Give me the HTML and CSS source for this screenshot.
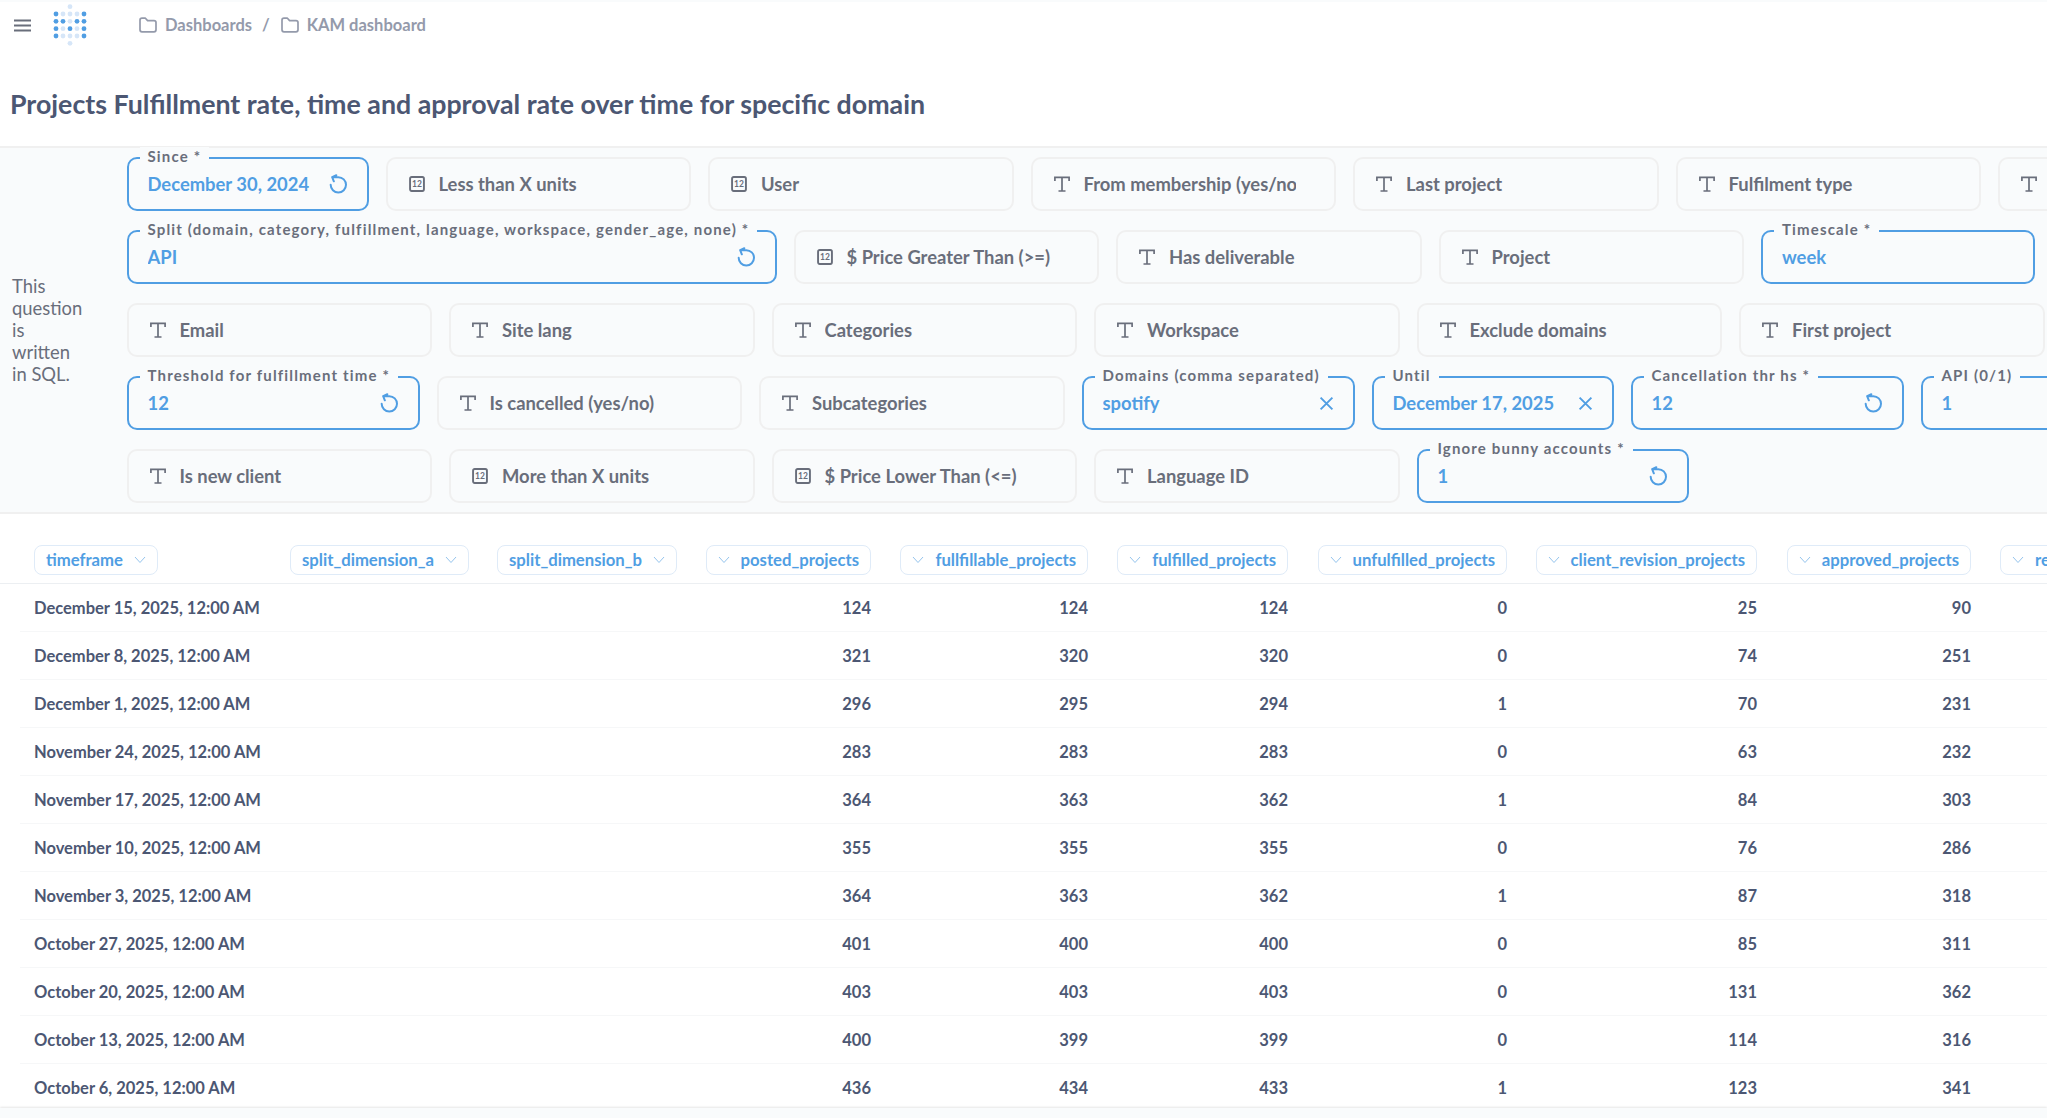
FILE: index.html
```html
<!DOCTYPE html>
<html lang="en">
  <head>
    <meta charset="UTF-8" />
    <meta name="viewport" content="width=device-width, initial-scale=1.0" />
    <title>Projects Fulfillment rate</title>
    <link rel="stylesheet" href="styles.css">
  </head>
  <body>
    <!-- Icons -->
    <svg class="icon-defs" width="0" height="0">
      <symbol id="i-folder" viewBox="0 0 18 16"><path d="M1 3.2C1 2 1.8 1.2 3 1.2h3.4l2.2 2.4H15c1.200 0 2 .8 2 2v7.200c0 1.200-.8 2-2 2H3c-1.200 0-2-.8-2-2z" fill="none" stroke="currentColor" stroke-width="1.700" stroke-linejoin="round"/></symbol>
      <symbol id="i-text" viewBox="0 0 16 16"><path d="M.9 5V1.300h14.200V5M8 1.300V15M4.500 15h7" fill="none" stroke="currentColor" stroke-width="1.700"/></symbol>
      <symbol id="i-number" viewBox="0 0 15 15"><rect x="1" y="1" width="13" height="13" rx="1.500" fill="none" stroke="currentColor" stroke-width="1.800"/><text x="7.500" y="10.700" text-anchor="middle" font-family="Lato" font-size="8" font-weight="700" fill="currentColor">12</text></symbol>
      <symbol id="i-reset" viewBox="0 0 24 24"><path d="M3.200 13a9.200 9.200 0 1 0 9.200-9.200H5.500M10 1.500L5 3.800l2 5" fill="none" stroke="currentColor" stroke-width="2.400" stroke-linecap="round" stroke-linejoin="round"/></symbol>
      <symbol id="i-close" viewBox="0 0 14 14"><path d="M1.500 1.500l11 11M12.500 1.500l-11 11" fill="none" stroke="currentColor" stroke-width="1.800"/></symbol>
      <symbol id="i-chevron" viewBox="0 0 12 8"><path d="M1 1l5 5.500L11 1" fill="none" stroke="currentColor" stroke-width="1"/></symbol>
    </svg>

    <!-- Navbar -->
    <header class="navbar">
      <svg class="menu-icon" width="17" height="13" viewBox="0 0 17 13"><path d="M0 1.500h17M0 6.500h17M0 11.500h17" stroke="#696e7b" stroke-width="2.200"/></svg>
      <svg class="logo" width="34" height="42" viewBox="0 0 34 42">
        <g fill="#509ee3">
          <circle cx="3" cy="10" r="2.400"/><circle cx="31" cy="10" r="2.400"/>
          <circle cx="3" cy="17.300" r="2.400"/><circle cx="10" cy="17.300" r="2.400"/><circle cx="24" cy="17.300" r="2.400"/><circle cx="31" cy="17.300" r="2.400"/>
          <circle cx="3" cy="24.700" r="2.400"/><circle cx="17" cy="24.700" r="2.400"/><circle cx="31" cy="24.700" r="2.400"/>
          <circle cx="3" cy="32" r="2.400"/><circle cx="31" cy="32" r="2.400"/>
        </g>
        <g fill="#d6e6f8">
          <circle cx="17" cy="2.700" r="2.400"/>
          <circle cx="10" cy="10" r="2.400"/><circle cx="17" cy="10" r="2.400"/><circle cx="24" cy="10" r="2.400"/>
          <circle cx="17" cy="17.300" r="2.400"/>
          <circle cx="10" cy="24.700" r="2.400"/><circle cx="24" cy="24.700" r="2.400"/>
          <circle cx="10" cy="32" r="2.400"/><circle cx="17" cy="32" r="2.400"/><circle cx="24" cy="32" r="2.400"/>
          <circle cx="17" cy="39.300" r="2.400"/>
        </g>
      </svg>
      <nav class="breadcrumbs">
        <svg class="crumb-icon"><use href="#i-folder"/></svg>
        <span>Dashboards</span>
        <span class="crumb-sep">/</span>
        <svg class="crumb-icon"><use href="#i-folder"/></svg>
        <span>KAM dashboard</span>
      </nav>
    </header>

    <h1 class="title">Projects Fulfillment rate, time and approval rate over time for specific domain</h1>

    <!-- Parameters -->
    <section class="params">
      <p class="sql-note">This question is written in SQL.</p>
      <div class="param-rows">
        <div class="param-row">
          <div class="param is-set w-since"><label>Since *</label><span class="param-value">December 30, 2024</span><svg class="param-action"><use href="#i-reset"/></svg></div>
          <div class="param"><svg class="param-icon"><use href="#i-number"/></svg><span class="param-value">Less than X units</span></div>
          <div class="param"><svg class="param-icon"><use href="#i-number"/></svg><span class="param-value">User</span></div>
          <div class="param"><svg class="param-icon"><use href="#i-text"/></svg><span class="param-value">From membership (yes/no)</span></div>
          <div class="param"><svg class="param-icon"><use href="#i-text"/></svg><span class="param-value">Last project</span></div>
          <div class="param"><svg class="param-icon"><use href="#i-text"/></svg><span class="param-value">Fulfilment type</span></div>
          <div class="param"><svg class="param-icon"><use href="#i-text"/></svg><span class="param-value">Gender</span></div>
        </div>
        <div class="param-row">
          <div class="param is-set w-split"><label>Split (domain, category, fulfillment, language, workspace, gender_age, none) *</label><span class="param-value">API</span><svg class="param-action"><use href="#i-reset"/></svg></div>
          <div class="param"><svg class="param-icon"><use href="#i-number"/></svg><span class="param-value">$ Price Greater Than (&gt;=)</span></div>
          <div class="param"><svg class="param-icon"><use href="#i-text"/></svg><span class="param-value">Has deliverable</span></div>
          <div class="param"><svg class="param-icon"><use href="#i-text"/></svg><span class="param-value">Project</span></div>
          <div class="param is-set w-timescale"><label>Timescale *</label><span class="param-value">week</span></div>
        </div>
        <div class="param-row">
          <div class="param"><svg class="param-icon"><use href="#i-text"/></svg><span class="param-value">Email</span></div>
          <div class="param"><svg class="param-icon"><use href="#i-text"/></svg><span class="param-value">Site lang</span></div>
          <div class="param"><svg class="param-icon"><use href="#i-text"/></svg><span class="param-value">Categories</span></div>
          <div class="param"><svg class="param-icon"><use href="#i-text"/></svg><span class="param-value">Workspace</span></div>
          <div class="param"><svg class="param-icon"><use href="#i-text"/></svg><span class="param-value">Exclude domains</span></div>
          <div class="param"><svg class="param-icon"><use href="#i-text"/></svg><span class="param-value">First project</span></div>
        </div>
        <div class="param-row">
          <div class="param is-set w-threshold"><label>Threshold for fulfillment time *</label><span class="param-value">12</span><svg class="param-action"><use href="#i-reset"/></svg></div>
          <div class="param"><svg class="param-icon"><use href="#i-text"/></svg><span class="param-value">Is cancelled (yes/no)</span></div>
          <div class="param"><svg class="param-icon"><use href="#i-text"/></svg><span class="param-value">Subcategories</span></div>
          <div class="param is-set w-domains"><label>Domains (comma separated)</label><span class="param-value">spotify</span><svg class="param-action close"><use href="#i-close"/></svg></div>
          <div class="param is-set w-until"><label>Until</label><span class="param-value">December 17, 2025</span><svg class="param-action close"><use href="#i-close"/></svg></div>
          <div class="param is-set w-cancel"><label>Cancellation thr hs *</label><span class="param-value">12</span><svg class="param-action"><use href="#i-reset"/></svg></div>
          <div class="param is-set w-api"><label>API (0/1)</label><span class="param-value">1</span></div>
        </div>
        <div class="param-row">
          <div class="param"><svg class="param-icon"><use href="#i-text"/></svg><span class="param-value">Is new client</span></div>
          <div class="param"><svg class="param-icon"><use href="#i-number"/></svg><span class="param-value">More than X units</span></div>
          <div class="param"><svg class="param-icon"><use href="#i-number"/></svg><span class="param-value">$ Price Lower Than (&lt;=)</span></div>
          <div class="param"><svg class="param-icon"><use href="#i-text"/></svg><span class="param-value">Language ID</span></div>
          <div class="param is-set w-ignore"><label>Ignore bunny accounts *</label><span class="param-value">1</span><svg class="param-action"><use href="#i-reset"/></svg></div>
        </div>
      </div>
    </section>

    <!-- Table -->
    <section class="results">
      <div class="table-head">
        <div class="pill"><span>timeframe</span><svg class="chevron"><use href="#i-chevron"/></svg></div>
        <div class="pill"><span>split_dimension_a</span><svg class="chevron"><use href="#i-chevron"/></svg></div>
        <div class="pill"><span>split_dimension_b</span><svg class="chevron"><use href="#i-chevron"/></svg></div>
        <div class="pill num"><svg class="chevron"><use href="#i-chevron"/></svg><span>posted_projects</span></div>
        <div class="pill num"><svg class="chevron"><use href="#i-chevron"/></svg><span>fullfillable_projects</span></div>
        <div class="pill num"><svg class="chevron"><use href="#i-chevron"/></svg><span>fulfilled_projects</span></div>
        <div class="pill num"><svg class="chevron"><use href="#i-chevron"/></svg><span>unfulfilled_projects</span></div>
        <div class="pill num"><svg class="chevron"><use href="#i-chevron"/></svg><span>client_revision_projects</span></div>
        <div class="pill num"><svg class="chevron"><use href="#i-chevron"/></svg><span>approved_projects</span></div>
        <div class="pill num last"><svg class="chevron"><use href="#i-chevron"/></svg><span>rejected_projects</span></div>
      </div>
      <div class="table-row"><span>December 15, 2025, 12:00 AM</span><span></span><span></span><span>124</span><span>124</span><span>124</span><span>0</span><span>25</span><span>90</span></div>
      <div class="table-row"><span>December 8, 2025, 12:00 AM</span><span></span><span></span><span>321</span><span>320</span><span>320</span><span>0</span><span>74</span><span>251</span></div>
      <div class="table-row"><span>December 1, 2025, 12:00 AM</span><span></span><span></span><span>296</span><span>295</span><span>294</span><span>1</span><span>70</span><span>231</span></div>
      <div class="table-row"><span>November 24, 2025, 12:00 AM</span><span></span><span></span><span>283</span><span>283</span><span>283</span><span>0</span><span>63</span><span>232</span></div>
      <div class="table-row"><span>November 17, 2025, 12:00 AM</span><span></span><span></span><span>364</span><span>363</span><span>362</span><span>1</span><span>84</span><span>303</span></div>
      <div class="table-row"><span>November 10, 2025, 12:00 AM</span><span></span><span></span><span>355</span><span>355</span><span>355</span><span>0</span><span>76</span><span>286</span></div>
      <div class="table-row"><span>November 3, 2025, 12:00 AM</span><span></span><span></span><span>364</span><span>363</span><span>362</span><span>1</span><span>87</span><span>318</span></div>
      <div class="table-row"><span>October 27, 2025, 12:00 AM</span><span></span><span></span><span>401</span><span>400</span><span>400</span><span>0</span><span>85</span><span>311</span></div>
      <div class="table-row"><span>October 20, 2025, 12:00 AM</span><span></span><span></span><span>403</span><span>403</span><span>403</span><span>0</span><span>131</span><span>362</span></div>
      <div class="table-row"><span>October 13, 2025, 12:00 AM</span><span></span><span></span><span>400</span><span>399</span><span>399</span><span>0</span><span>114</span><span>316</span></div>
      <div class="table-row"><span>October 6, 2025, 12:00 AM</span><span></span><span></span><span>436</span><span>434</span><span>433</span><span>1</span><span>123</span><span>341</span></div>
    </section>
    <footer class="footer-bar"></footer>
  </body>
</html>
```

FILE: styles.css
```css
/* Page */
html,
body {
  height: 100%;
  overflow: hidden;
}
body {
  margin: 0;
  padding: 0;
  display: flex;
  flex-direction: column;
  width: 2047px;
  height: 1118px;
  font-family: Lato, "Open Sans", sans-serif;
  color: #4c5773;
  background: white;
}
.icon-defs {
  position: absolute;
}

/* Navbar */
.navbar {
  display: flex;
  align-items: center;
  height: 48px;
  flex: none;
  padding-left: 14px;
  box-sizing: border-box;
  border-top: 2px solid #f9fbfc;
}
.menu-icon {
  flex: none;
}
.logo {
  flex: none;
  margin: 0 0 0 22px;
}
.breadcrumbs {
  display: flex;
  align-items: center;
  margin-left: 52px;
  color: #949aab;
  font-size: 16.500px;
  font-weight: 700;
}
.crumb-icon {
  width: 18px;
  height: 16px;
  margin-right: 8px;
}
.crumb-sep {
  margin: 0 11px 0 10px;
}

/* Title */
.title {
  flex: none;
  height: 98px;
  line-height: 112px;
  margin: 0;
  padding-left: 10px;
  font-size: 26.750px;
  font-weight: 700;
  white-space: nowrap;
}

/* Parameters */
.params {
  flex: none;
  display: flex;
  align-items: center;
  box-sizing: border-box;
  height: 368px;
  padding: 9px 0 9px 12px;
  background: #f9fbfc;
  border-top: 2px solid #f0f0f0;
  border-bottom: 2px solid #f0f0f0;
}
.sql-note {
  flex: none;
  width: 72px;
  margin: 0 42.500px 0 0;
  font-size: 18.400px;
  line-height: 22px;
  color: #696e7b;
}
.param-rows {
  display: flex;
  flex-direction: column;
  gap: 19.100px;
}
.param-row {
  display: flex;
  gap: 17px;
}
.param {
  position: relative;
  flex: none;
  display: flex;
  align-items: center;
  box-sizing: border-box;
  width: 305.500px;
  height: 54px;
  padding: 0 38px 0 21px;
  border: 2px solid #f0f0f0;
  border-radius: 10px;
  color: #696e7b;
  font-size: 18.400px;
  font-weight: 700;
}
.param-icon {
  flex: none;
  width: 16px;
  height: 16px;
  margin-right: 14px;
}
.param-value {
  flex: 1;
  overflow: hidden;
  white-space: nowrap;
}
.param.is-set {
  padding: 0 19px;
  border-color: #509ee3;
  color: #509ee3;
}
.param label {
  position: absolute;
  top: -12px;
  left: 11px;
  padding: 0 8px;
  background: #f9fbfc;
  color: #696e7b;
  font-size: 15px;
  line-height: 18px;
  letter-spacing: 1.160px;
  white-space: nowrap;
}
.param-action {
  flex: none;
  width: 20px;
  height: 20px;
}
.param-action.close {
  width: 15px;
  height: 15px;
}
.w-since {
  width: 242px;
}
.w-split {
  width: 650px;
}
.w-timescale {
  width: 274px;
}
.w-threshold {
  width: 293px;
}
.w-domains {
  width: 273px;
}
.w-until {
  width: 242px;
}
.w-cancel {
  width: 273px;
}
.w-api {
  width: 200px;
}
.w-ignore {
  width: 272px;
}

/* Table */
.results {
  flex: 1;
  min-height: 0;
  overflow: hidden;
}
.table-head,
.table-row {
  display: grid;
  grid-template-columns: 227px 178px 179px 166px 188px 171px 190px 221px 185px 200px;
  column-gap: 29px;
}
.table-head {
  height: 38px;
  margin-top: 31px;
  padding-left: 34px;
  border-bottom: 1px solid #eceff2;
  align-items: start;
}
.pill {
  display: flex;
  align-items: center;
  justify-content: space-between;
  gap: 11px;
  box-sizing: border-box;
  height: 30px;
  padding: 0 11px 1px;
  border: 1px solid #dfebf8;
  border-radius: 8px;
  color: #509ee3;
  font-size: 16.700px;
  font-weight: 700;
  white-space: nowrap;
  justify-self: start;
}
.pill.num {
  justify-self: end;
}
.pill.last {
  justify-self: start;
}
.chevron {
  flex: none;
  width: 12px;
  height: 8px;
  opacity: 0.6;
}
.table-row {
  height: 48px;
  box-sizing: border-box;
  margin-left: 20px;
  padding-left: 14px;
  align-items: center;
  border-bottom: 1px solid #f6f7f8;
  font-size: 16.500px;
  font-weight: 700;
  white-space: nowrap;
}
.table-row span:nth-child(n + 4) {
  text-align: right;
}

/* Bottom bar */
.footer-bar {
  flex: none;
  height: 10px;
  background: #f9fbfc;
  box-shadow: 0 -1px 2px rgba(0, 0, 0, 0.1);
  position: relative;
}
```
